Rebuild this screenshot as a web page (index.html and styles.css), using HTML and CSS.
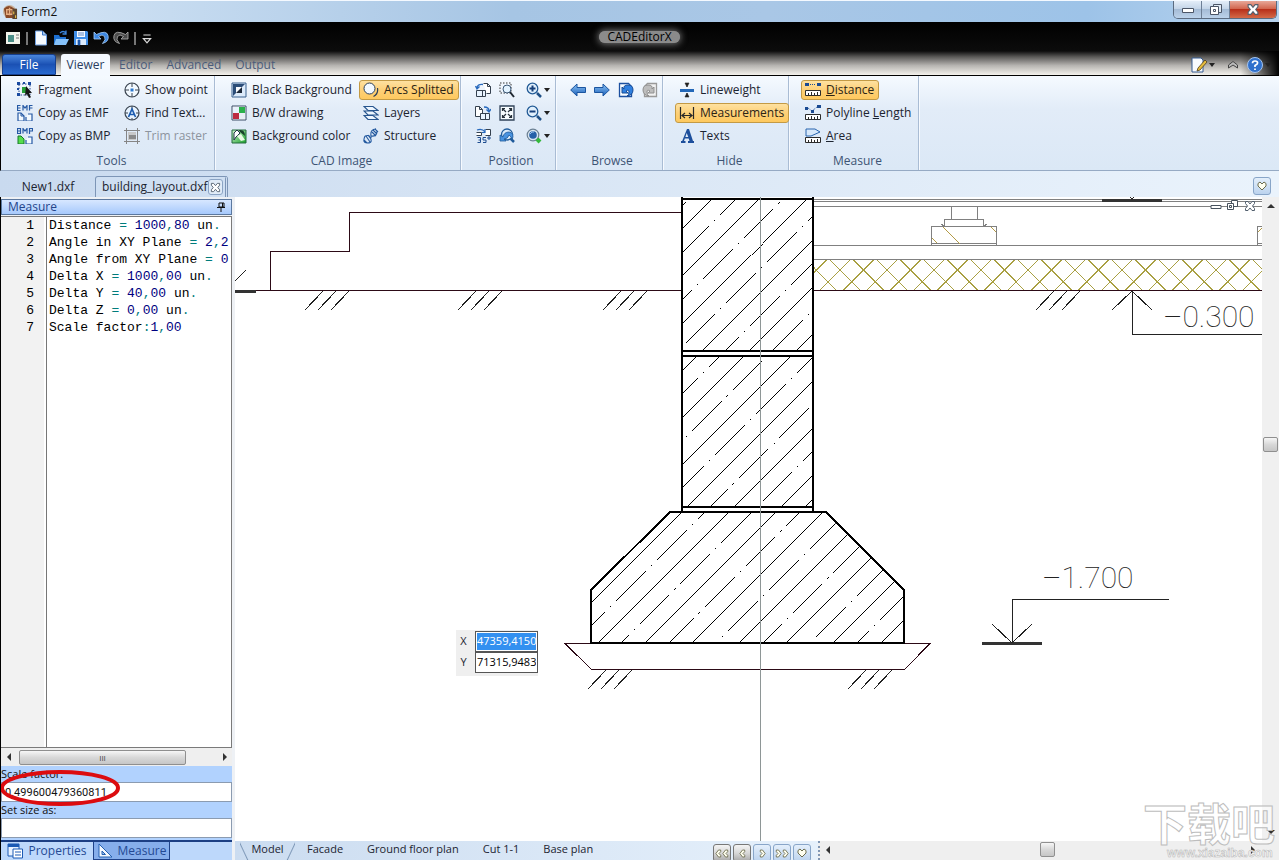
FILE: index.html
```html
<!DOCTYPE html>
<html lang="en">
<head>
<meta charset="utf-8">
<title>Form2</title>
<link rel="stylesheet" href="styles.css">
</head>
<body>
<svg class="defs" aria-hidden="true">
  <defs>
    <linearGradient id="gBlue" x1="0" y1="0" x2="0" y2="1"><stop offset="0" stop-color="#8cc4f6"/><stop offset="1" stop-color="#1c5fb8"/></linearGradient>
    <linearGradient id="gGreen" x1="0" y1="0" x2="1" y2="1"><stop offset="0" stop-color="#d4f5d0"/><stop offset="1" stop-color="#18a02a"/></linearGradient>
    <symbol id="i-app" viewBox="0 0 16 16"><circle cx="7" cy="8" r="7" fill="#c9b5a0"/><path d="M1 5q5-6 11 0v10H3z" fill="#8a4a28"/><path d="M4 6h6v5H4zM7 4v8" fill="none" stroke="#e9b184" stroke-width="1.500"/><path d="M10 5h5v11h-5z" fill="#5c4632"/><path d="M11 8h1v3h-1zM13 12h1v3h-1z" fill="#ffd24a"/></symbol>
    <symbol id="i-form" viewBox="0 0 16 16"><path d="M1 2h14v12H1z" fill="#f4f4ec"/><path d="M3 5h6v7H3z" fill="#4d8f88"/><path d="M11 5h3M11 8h3" stroke="#777"/></symbol>
    <symbol id="i-new" viewBox="0 0 16 16"><path d="M2.500 1h7l4 4v10h-11z" fill="#f6faff" stroke="#6d9ee0"/><path d="M9.500 1v4h4" fill="#a9cbf4" stroke="#3572c6"/></symbol>
    <symbol id="i-open" viewBox="0 0 16 16"><path d="M1 5h5l1 2h6v7H1z" fill="#1d6fd0"/><path d="M3 9h13l-3 6H1z" fill="#86c2fa"/><path d="M7 3q3-3 6 0M13 .5V4H9.500" fill="none" stroke="#3c86dc" stroke-width="1.300"/></symbol>
    <symbol id="i-save" viewBox="0 0 16 16"><path d="M1 1h13l1 1v13H1z" fill="#3f8ee8"/><path d="M4 1h8v6H4z" fill="#f6f9ff"/><path d="M3 9h10v6H3z" fill="#dceafc"/><path d="M5 10h2v5H5zM5 3h6M5 5h6" fill="#1c56aa" stroke="#1c56aa" stroke-width=".7"/></symbol>
    <symbol id="i-undo" viewBox="0 0 16 16"><path d="M1 2v7h7L5.500 6.500q4-3 6 0t-2 7q7-2 5.500-8T3.500 4.500z" fill="#3d87e2" stroke="#a8cffa" stroke-width=".8"/></symbol>
    <symbol id="i-redo" viewBox="0 0 16 16"><path d="M15 2v7H8l2.500-2.500q-4-3-6 0t2 7q-7-2-5.500-8T12.500 4.500z" fill="#4c4c4c" stroke="#b4b4b4" stroke-width=".8"/></symbol>
    <symbol id="i-fragment" viewBox="0 0 16 16"><path d="M2 2h11v11H2z" fill="none" stroke="#24468c" stroke-dasharray="1.500 1.500"/><path d="M0 0h3v3H0zM11 0h3v3h-3zM0 11h3v3H0zM6 0h2v2H6zM0 6h2v2H0z" fill="#1a4aa0"/><path d="M5 5h5v6H5z" fill="#27a03a"/><path d="M9 4l6 7-3 .3 2 4-2 .7-2-4-2 2z" fill="#161616"/></symbol>
    <symbol id="i-emf" viewBox="0 0 16 16"><path d="M1 8h3l3 3v5H1zM9 12v4h6V9h-4" fill="#f4faff" stroke="#2458a4" stroke-width="1.200"/><path d="M4 8v3h3" fill="none" stroke="#2458a4"/><path d="M3.500.5H.5v5h3M.5 3h3M6 5.500v-5l2 2.500 2-2.500v5M12.500 5.500v-5h3M12.500 3h3" fill="none" stroke="#2458a4" stroke-width="1.200"/></symbol>
    <symbol id="i-bmp" viewBox="0 0 16 16"><path d="M1 8h3l3 3v5H1z" fill="#55dd4c" stroke="#16782a"/><path d="M9 12v4h6V9h-4" fill="#f4faff" stroke="#2458a4" stroke-width="1.200"/><path d="M.5.500v5h3v-5zM.5 3h3M6 5.500v-5l2 2.500 2-2.500v5M12.500 6V.5h3V3h-3" fill="none" stroke="#2458a4" stroke-width="1.200"/></symbol>
    <symbol id="i-point" viewBox="0 0 16 16"><circle cx="8" cy="8" r="7" fill="#f2f9ff" stroke="#3a4450" stroke-width="1.200"/><path d="M8 1v4M8 11v4M1 8h4M11 8h4" stroke="#3a4450"/><path d="M6.500 6.500h3v3h-3z" fill="#2e7ad0"/></symbol>
    <symbol id="i-find" viewBox="0 0 16 16"><circle cx="8" cy="8" r="7" fill="#e7f3ff" stroke="#3a4450" stroke-width="1.200"/><path d="M8 1v3M1 8h3M12 8h3M8 13v2" stroke="#3a4450"/><path d="M4.500 12L8 4l3.500 8M6 9.500h4" fill="none" stroke="#1c5cb0" stroke-width="1.700"/></symbol>
    <symbol id="i-trim" viewBox="0 0 16 16"><path d="M2.500 0v16M13.500 0v16M0 2.500h16M0 13.500h16" stroke="#858585"/><path d="M4 4h8v8H4z" fill="#c8c8c8"/><path d="M5 7h7v4H5z" fill="#8a8a8a"/></symbol>
    <symbol id="i-black" viewBox="0 0 16 16"><path d="M1 1h14v14H1z" fill="#dcebfb" stroke="#38618e"/><path d="M2 2h12L2 14z" fill="#2b4d78"/><path d="M5 5h6v6H5z" fill="#f8fbff"/><path d="M11 5v6H5z" fill="#1b2737"/></symbol>
    <symbol id="i-bw" viewBox="0 0 16 16"><path d="M1 1h14v14H1z" fill="#fff" stroke="#3b4d66"/><path d="M8 2h6v6H8z" fill="#2bb04a"/><path d="M2 8h6v6H2z" fill="#bd2b3f"/><path d="M8 8h6v6H8z" fill="#e8eef4"/><path d="M2 2h6v6H2z" fill="#e8f1fb"/></symbol>
    <symbol id="i-bgcolor" viewBox="0 0 16 16"><path d="M1 2h14v13H1z" fill="url(#gGreen)" stroke="#226a3c"/><path d="M3 12V5l3-3 3 3-4 4z" fill="#fff" stroke="#23354a"/><path d="M6 8l4-2 4 6-4 1z" fill="#e9fbe4"/><path d="M8 2q6-1 6 6l-5-4z" fill="#18422a"/></symbol>
    <symbol id="i-arcs" viewBox="0 0 16 16"><circle cx="6.500" cy="6.500" r="5.500" fill="#f2f9ff" stroke="#2b3f58"/><path d="M14.500 6q1 6-4 8.500" fill="none" stroke="#2b3f58" stroke-width="1.200"/></symbol>
    <symbol id="i-layers" viewBox="0 0 16 16"><path d="M1 10.500h9l5 4H5z" fill="#edf6ff" stroke="#27558e" stroke-width="1.200"/><path d="M1 6h9l5 4H5z" fill="#edf6ff" stroke="#27558e" stroke-width="1.200"/><path d="M1 1.500h9l5 4H5z" fill="#edf6ff" stroke="#27558e" stroke-width="1.200"/></symbol>
    <symbol id="i-structure" viewBox="0 0 16 16"><path d="M2 8q6-2 6 4M2 8q-3 7 2 7t4-3M8 8q6 1 6-5M8 8q-1-7 5-7M1 12l3 3M3 8l4 6M5 7l3 4M9 4l4 4M10 2l4 4M12 1l3 3M7 9q1 1 2-1" fill="none" stroke="#23599f" stroke-width="1.100"/></symbol>
    <symbol id="i-rotl" viewBox="0 0 16 16"><path d="M8.500 1.500h4l3 3v7h-4M12.500 1.500v3h3" fill="#fff" stroke="#35414f"/><path d="M1.500 8.500h9v6h-9zM7.500 8.500v6" fill="#e9f4ff" stroke="#35414f"/><path d="M2 6q0-4 6-3.500M.5 4L2 7l2.500-2.500" fill="none" stroke="#2769bd" stroke-width="1.300"/></symbol>
    <symbol id="i-rotr" viewBox="0 0 16 16"><path d="M.5 1.500h4l3 3v7h-7zM4.500 1.500v3h3" fill="#fff" stroke="#35414f"/><path d="M5.500 8.500h9v6h-9zM10.500 8.500v6" fill="#e9f4ff" stroke="#35414f"/><path d="M9 2q5 0 5 4M11.500 4.500L14 7l2-3" fill="none" stroke="#2769bd" stroke-width="1.300"/></symbol>
    <symbol id="i-rot35" viewBox="0 0 16 16"><path d="M10.500 1.500h5v6h-5M1.500 4.500h5v3h-5" fill="#fff" stroke="#35414f"/><path d="M2 2q5-2 8 2M7 4.500h3V1" fill="none" stroke="#2769bd" stroke-width="1.200"/><path d="M2.500 9.500h3v5h-3M3.500 12h2M11 9.500H8V12h3v2.500H8M13 9h2v2h-2z" fill="none" stroke="#1e4d90"/></symbol>
    <symbol id="i-zoomwin" viewBox="0 0 16 16"><path d="M1 1h11v10H1z" fill="none" stroke="#333" stroke-dasharray="1.500 1.500"/><circle cx="8" cy="7" r="4" fill="#e3f3ff" stroke="#3c5876"/><path d="M11 10l4 5" stroke="#1e2730" stroke-width="2"/></symbol>
    <symbol id="i-fit" viewBox="0 0 16 16"><path d="M1 1h14v14H1z" fill="#f7fcff" stroke="#31435a" stroke-width="1.300"/><path d="M3.500 6V3.500H6M3.500 3.500L7 7M10 3.500h2.500V6M12.500 3.500L9 7M3.500 10v2.500H6M3.500 12.500L7 9M10 12.500h2.500V10M12.500 12.500L9 9" fill="none" stroke="#26303a" stroke-width="1.200"/></symbol>
    <symbol id="i-zoomprev" viewBox="0 0 16 16"><path d="M10 9l5 5" stroke="#205a9a" stroke-width="2.500"/><circle cx="8" cy="6.500" r="5.500" fill="#ddecfb" stroke="#235e9c" stroke-width="1.300"/><path d="M1 7v6h6L5 11q4 0 5-4 3 2 3 5 3-7-3-8-5 0-6 5z" fill="#4a93df" stroke="#205a9a" stroke-width=".8"/></symbol>
    <symbol id="i-zoomin" viewBox="0 0 16 16"><circle cx="6.500" cy="6.500" r="5.300" fill="#e1f0fd" stroke="#235b96" stroke-width="1.300"/><path d="M11 11l4 4" stroke="#1e4f86" stroke-width="2.500"/><path d="M3.500 6.500h6M6.500 3.500v6" stroke="#163f7a" stroke-width="2"/></symbol>
    <symbol id="i-zoomout" viewBox="0 0 16 16"><circle cx="6.500" cy="6.500" r="5.300" fill="#e1f0fd" stroke="#235b96" stroke-width="1.300"/><path d="M11 11l4 4" stroke="#1e4f86" stroke-width="2.500"/><path d="M3.500 6.500h6" stroke="#163f7a" stroke-width="2"/></symbol>
    <symbol id="i-zoomall" viewBox="0 0 16 16"><circle cx="7" cy="7" r="5.800" fill="#d9e6f1" stroke="#6b8093" stroke-width="1.200"/><circle cx="7" cy="7" r="3.800" fill="#2660a8"/><path d="M4 6q2-3 4-2" fill="none" stroke="#9cc4f0"/><path d="M11 11l3 3" stroke="#34b83c" stroke-width="4"/></symbol>
    <symbol id="i-back" viewBox="0 0 16 16"><path d="M7 2v3.500h8.500v5H7V14L.7 8z" fill="url(#gBlue)" stroke="#1b55a0"/></symbol>
    <symbol id="i-forward" viewBox="0 0 16 16"><path d="M9 2v3.500H.5v5H9V14l6.300-6z" fill="url(#gBlue)" stroke="#1b55a0"/></symbol>
    <symbol id="i-reload" viewBox="0 0 16 16"><path d="M1.500 1.500h9l3 3v10h-12z" fill="#f7fbff" stroke="#1c50a0" stroke-width="1.300"/><path d="M4 5v6h6L8 9q3-2 3 1t-2 4q6-1 6-6t-5-5-4 4z" fill="#2f7fdf" stroke="#174c96"/></symbol>
    <symbol id="i-reloadoff" viewBox="0 0 16 16"><path d="M14.500 14.500h-12v-10l3-3h9z" fill="#f1f1f1" stroke="#999" stroke-width="1.300"/><path d="M12 5v6H6l2-2q-3-2-3 1t2 4q-6-1-6-6t5-5 4 4z" fill="#bdbdbd" stroke="#8f8f8f"/></symbol>
    <symbol id="i-lineweight" viewBox="0 0 16 16"><path d="M1 7h14v3H1z" fill="#2368b8"/><path d="M6 1h4L8 5zM6 15h4l-2-4zM8 1v4M8 11v4" fill="#222" stroke="#222" stroke-width=".6"/></symbol>
    <symbol id="i-meas" viewBox="0 0 16 16"><path d="M1.500 2v12M14.500 2v12M3 10.500h10M6 8l-3 2.500L6 13M10 8l3 2.500L10 13" fill="none" stroke="#282828" stroke-width="1.200"/></symbol>
    <symbol id="i-texts" viewBox="0 0 16 16"><path d="M8 1h2l4 12h1v2H9v-2h1.500l-.8-2.500H5.800L5 13h1.500v2H2v-2h1.200zM7.700 5L6.400 9h2.900z" fill="#1d4f9c"/></symbol>
    <symbol id="i-dist" viewBox="0 0 16 16"><path d="M0 1h4v3H0zM12 1h4v3h-4z" fill="#1a4a92"/><path d="M5 2.500h6" stroke="#1a4a92" stroke-dasharray="1 1"/><path d="M.5 8.500h15v5H.5z" fill="#fff" stroke="#2b2b2b"/><path d="M3.500 11v2M6.500 10v3M9.500 11v2M12.500 10v3" stroke="#2b2b2b"/></symbol>
    <symbol id="i-poly" viewBox="0 0 16 16"><path d="M0 2h3v3H0zM6 5h3v3H6zM12 0h4v3h-4z" fill="#1a4a92"/><path d="M3 3l4 3 5-4" fill="none" stroke="#1a4a92" stroke-dasharray="1 1"/><path d="M.5 9.500h15v5H.5z" fill="#fff" stroke="#2b2b2b"/><path d="M3.500 12v2M6.500 11v3M9.500 12v2M12.500 11v3" stroke="#2b2b2b"/></symbol>
    <symbol id="i-area" viewBox="0 0 16 16"><path d="M1 1h9l5 3-9 4H1z" fill="#d8e9fb" stroke="#2864ae"/><path d="M.5 9.500h15v5H.5z" fill="#fff" stroke="#2b2b2b"/><path d="M3.500 12v2M6.500 11v3M9.500 12v2M12.500 11v3" stroke="#2b2b2b"/></symbol>
    <symbol id="i-edit" viewBox="0 0 16 16"><path d="M1 1h9l2 2v12H1z" fill="#f8fbff" stroke="#345a90"/><path d="M14 3l2 2-7 8-3 1 1-3z" fill="#e7bc3c" stroke="#4c3c1a" stroke-width=".8"/></symbol>
    <symbol id="i-help" viewBox="0 0 16 16"><circle cx="8" cy="8" r="7.500" fill="#2f70cc" stroke="#a5c4ee"/><path d="M5.500 6.200Q5.500 4 8 4t2.600 2Q10.600 7.200 8 8.500V10M8 11.500v1.500" fill="none" stroke="#fff" stroke-width="1.700"/></symbol>
    <symbol id="i-pin" viewBox="0 0 10 10"><path d="M3 1h5v4H3zM6.500 1v4M1 5.500h8M5 6v4" fill="none" stroke="#111"/></symbol>
    <symbol id="i-props" viewBox="0 0 16 16"><path d="M1 1h11v12H1z" fill="#eaf3ff" stroke="#1c5ab4"/><path d="M1 1h11v3H1z" fill="#1c5ab4"/><path d="M6 6h9.500v9H6z" fill="#fff" stroke="#1c5ab4"/><path d="M8 9h6M8 12h6" stroke="#1c5ab4"/></symbol>
    <symbol id="i-square" viewBox="0 0 16 16"><path d="M2 1v13h13z" fill="#f4f9ff" stroke="#2460b0"/><path d="M5 8v3.500h3.500z" fill="#9cc1ef" stroke="#2460b0"/></symbol>
    <symbol id="i-cross" viewBox="0 0 12 12"><path d="M1.500 1.500h2.500l2 2.500 2-2.500h2.500v2L8.500 6l2 2.500v2H8L6 8l-2 2.500H1.500v-2l2-2.500-2-2.500z" fill="#fff" stroke="#53606e"/></symbol>
    <symbol id="i-heart" viewBox="0 0 10 10"><path d="M1 2.500L3 1l2 2 2-2 2 1.500V5L5 9 1 5z" fill="#fffff0" stroke="#6d6d4e"/></symbol>
    <symbol id="i-chev" viewBox="0 0 8 10"><path d="M4 1h2.500v2L4.500 5l2 2v2H4L1 5z" fill="#fffff0" stroke="#6d6d4e"/></symbol>
  </defs>
</svg>

<div class="window">
  <header class="titlebar">
    <svg class="app-icon"><use href="#i-app"/></svg>
    <h1 class="form-title">Form2</h1>
    <div class="win-buttons">
      <button class="win-btn win-min" aria-label="Minimize"><svg width="14" height="12"><path d="M1.500 5.500h11v4h-11z" fill="#fff" stroke="#4b5566"/></svg></button>
      <button class="win-btn win-max" aria-label="Restore"><svg width="14" height="13"><path d="M4.500 1.500h8v8h-8z" fill="#dfe9f4" stroke="#4b5566"/><path d="M1.500 3.500h8v8h-8zM4.500 6.500h2v2h-2z" fill="#fff" stroke="#4b5566"/></svg></button>
      <button class="win-btn win-close" aria-label="Close"><svg width="14" height="12"><use href="#i-cross"/></svg></button>
    </div>
  </header>

  <div class="caption">
    <div class="qat">
      <button class="tool" aria-label="Form"><svg><use href="#i-form"/></svg></button>
      <span class="bar"></span>
      <button class="tool" aria-label="New"><svg><use href="#i-new"/></svg></button>
      <button class="tool" aria-label="Open"><svg><use href="#i-open"/></svg></button>
      <button class="tool" aria-label="Save"><svg><use href="#i-save"/></svg></button>
      <button class="tool" aria-label="Undo"><svg><use href="#i-undo"/></svg></button>
      <button class="tool" aria-label="Redo"><svg><use href="#i-redo"/></svg></button>
      <span class="bar"></span>
      <button class="more" aria-label="Customize"><svg viewBox="0 0 10 10"><path d="M2 2.500h6M2 5.500h6L5 9z" fill="none" stroke="#ddd"/></svg></button>
    </div>
    <div class="caption-title">CADEditorX</div>
  </div>

  <nav class="tabs">
    <button class="tab file">File</button>
    <button class="tab active">Viewer</button>
    <button class="tab">Editor</button>
    <button class="tab">Advanced</button>
    <button class="tab">Output</button>
    <div class="tabs-right">
      <button class="tool" aria-label="Style"><svg><use href="#i-edit"/></svg></button><i class="caret"></i>
      <button class="tool collapse" aria-label="Collapse ribbon"><svg viewBox="0 0 16 16"><path d="M3.500 11V8L8 4.500 12.500 8v3L8 8z" fill="#bbb" stroke="#444"/></svg></button>
      <button class="tool" aria-label="Help"><svg><use href="#i-help"/></svg></button><i class="caret"></i>
    </div>
  </nav>

  <section class="ribbon">
    <div class="group g-tools">
      <div class="cmds">
        <button class="cmd"><svg><use href="#i-fragment"/></svg>Fragment</button>
        <button class="cmd"><svg><use href="#i-point"/></svg>Show point</button>
        <button class="cmd"><svg><use href="#i-emf"/></svg>Copy as EMF</button>
        <button class="cmd"><svg><use href="#i-find"/></svg>Find Text...</button>
        <button class="cmd"><svg><use href="#i-bmp"/></svg>Copy as BMP</button>
        <button class="cmd" disabled><svg><use href="#i-trim"/></svg>Trim raster</button>
      </div>
      <h2>Tools</h2>
    </div>
    <div class="group g-image">
      <div class="cmds">
        <button class="cmd"><svg><use href="#i-black"/></svg>Black Background</button>
        <button class="cmd on"><svg><use href="#i-arcs"/></svg>Arcs Splitted</button>
        <button class="cmd"><svg><use href="#i-bw"/></svg>B/W drawing</button>
        <button class="cmd"><svg><use href="#i-layers"/></svg>Layers</button>
        <button class="cmd"><svg><use href="#i-bgcolor"/></svg>Background color</button>
        <button class="cmd"><svg><use href="#i-structure"/></svg>Structure</button>
      </div>
      <h2>CAD Image</h2>
    </div>
    <div class="group g-pos">
      <div class="cmds">
        <button class="cmd" aria-label="Rotate left"><svg><use href="#i-rotl"/></svg></button>
        <button class="cmd" aria-label="Zoom window"><svg><use href="#i-zoomwin"/></svg></button>
        <button class="cmd drop" aria-label="Zoom in"><svg><use href="#i-zoomin"/></svg><i class="caret"></i></button>
        <button class="cmd" aria-label="Rotate right"><svg><use href="#i-rotr"/></svg></button>
        <button class="cmd" aria-label="Fit"><svg><use href="#i-fit"/></svg></button>
        <button class="cmd drop" aria-label="Zoom out"><svg><use href="#i-zoomout"/></svg><i class="caret"></i></button>
        <button class="cmd" aria-label="Rotate by angle"><svg><use href="#i-rot35"/></svg></button>
        <button class="cmd" aria-label="Previous zoom"><svg><use href="#i-zoomprev"/></svg></button>
        <button class="cmd drop" aria-label="Zoom all"><svg><use href="#i-zoomall"/></svg><i class="caret"></i></button>
      </div>
      <h2>Position</h2>
    </div>
    <div class="group g-browse">
      <div class="cmds">
        <button class="cmd" aria-label="Back"><svg><use href="#i-back"/></svg></button>
        <button class="cmd" aria-label="Forward"><svg><use href="#i-forward"/></svg></button>
        <button class="cmd" aria-label="Reload"><svg><use href="#i-reload"/></svg></button>
        <button class="cmd" aria-label="Repeat"><svg><use href="#i-reloadoff"/></svg></button>
      </div>
      <h2>Browse</h2>
    </div>
    <div class="group g-hide">
      <div class="cmds">
        <button class="cmd"><svg><use href="#i-lineweight"/></svg>Lineweight</button>
        <button class="cmd on"><svg><use href="#i-meas"/></svg>Measurements</button>
        <button class="cmd"><svg><use href="#i-texts"/></svg>Texts</button>
      </div>
      <h2>Hide</h2>
    </div>
    <div class="group g-measure">
      <div class="cmds">
        <button class="cmd on"><svg><use href="#i-dist"/></svg><span><u>D</u>istance</span></button>
        <button class="cmd"><svg><use href="#i-poly"/></svg><span>Polyline <u>L</u>ength</span></button>
        <button class="cmd"><svg><use href="#i-area"/></svg><span><u>A</u>rea</span></button>
      </div>
      <h2>Measure</h2>
    </div>
  </section>

  <nav class="docs">
    <button class="doc">New1.dxf</button>
    <div class="doc current"><button class="doc-name">building_layout.dxf</button><button class="doc-close" aria-label="Close document"><svg><use href="#i-cross"/></svg></button></div>
    <button class="nav-btn docs-menu" aria-label="Documents"><svg class="heart"><use href="#i-heart"/></svg></button>
  </nav>

  <div class="work">
    <aside class="side">
      <div class="side-head"><h2>Measure</h2><button class="pin" aria-label="Pin"><svg><use href="#i-pin"/></svg></button></div>
      <ol class="code">
        <li><b>1</b><code>Distance <s>=</s> <em>1000</em><s>,</s><em>80</em> un<s>.</s></code></li>
        <li><b>2</b><code>Angle in XY Plane <s>=</s> <em>2</em><s>,</s><em>2</em></code></li>
        <li><b>3</b><code>Angle from XY Plane <s>=</s> <em>0</em></code></li>
        <li><b>4</b><code>Delta X <s>=</s> <em>1000</em><s>,</s><em>00</em> un<s>.</s></code></li>
        <li><b>5</b><code>Delta Y <s>=</s> <em>40</em><s>,</s><em>00</em> un<s>.</s></code></li>
        <li><b>6</b><code>Delta Z <s>=</s> <em>0</em><s>,</s><em>00</em> un<s>.</s></code></li>
        <li><b>7</b><code>Scale factor<s>:</s><em>1</em><s>,</s><em>00</em></code></li>
      </ol>
      <div class="hscroll side-scroll"><i class="arrow left"></i><span class="thumb">III</span><span class="track"></span><i class="arrow right"></i></div>
      <form class="fields">
        <label for="scale">Scale factor:</label>
        <input id="scale" value="0.499600479360811">
        <label for="size">Set size as:</label>
        <input id="size">
        <svg class="ring" width="120" height="38" aria-hidden="true"><ellipse cx="59" cy="19" rx="58" ry="16" fill="none" stroke="#dc0c10" stroke-width="4"/></svg>
      </form>
      <nav class="side-tabs">
        <button><svg><use href="#i-props"/></svg>Properties</button>
        <button class="current"><svg><use href="#i-square"/></svg>Measure</button>
      </nav>
    </aside>

    <main class="main">
      <div class="stage">
        <div class="canvas">
          <svg class="drawing" role="img" aria-label="Foundation section">
            <defs>
              <clipPath id="concrete"><path d="M683 200H812V350H683zM683 357H812V506H683zM671 513H825L903 590V642H592V590z"/></clipPath>
              <clipPath id="slab"><path d="M814 260H1262V290H814z"/></clipPath>
            </defs>
            <g transform="translate(-235 -197)" fill="none" shape-rendering="crispEdges">
              <g clip-path="url(#concrete)" stroke="#000">
                <g transform="rotate(-45)">
                  <path d="M-60 644.400H450M-60 677.700H450M-60 711H450M-60 744.300H450M-60 777.600H450M-60 810.900H450M-60 844.200H450M-60 877.500H450M-60 910.800H450M-60 944.100H450M-60 977.400H450M-60 1010.700H450M-60 1044H450M-60 1077.300H450"/>
                  <path stroke-dasharray="42 7 1.700 7" d="M-46.500 627.700H450M-46.500 661H450M-46.500 694.300H450M-46.500 727.600H450M-46.500 760.900H450M-46.500 794.200H450M-46.500 827.500H450M-46.500 860.800H450M-46.500 894.100H450M-46.500 927.400H450M-46.500 960.700H450M-46.500 994H450M-46.500 1027.300H450M-46.500 1060.600H450"/>
                </g>
              </g>
              <g clip-path="url(#slab)" stroke="#a9a042">
                <path d="M805.800 259.500l31 31m-7.500-31l31 31m-7.500-31l31 31m-7.500-31l31 31m-7.500-31l31 31m-7.500-31l31 31m-7.500-31l31 31m-7.500-31l31 31m-7.500-31l31 31m-7.500-31l31 31m-7.500-31l31 31m-7.500-31l31 31m-7.500-31l31 31m-7.500-31l31 31m-7.500-31l31 31m-7.500-31l31 31m-7.500-31l31 31m-7.500-31l31 31m-7.500-31l31 31m-7.500-31l31 31"/>
                <path d="M827.200 259.500l-31 31m54.500-31l-31 31m54.500-31l-31 31m54.500-31l-31 31m54.500-31l-31 31m54.500-31l-31 31m54.500-31l-31 31m54.500-31l-31 31m54.500-31l-31 31m54.500-31l-31 31m54.500-31l-31 31m54.500-31l-31 31m54.500-31l-31 31m54.500-31l-31 31m54.500-31l-31 31m54.500-31l-31 31m54.500-31l-31 31m54.500-31l-31 31m54.500-31l-31 31m54.500-31l-31 31"/>
              </g>
              <path stroke="#808080" d="M814 199.500H1262M814 201.500H1262M814 206.500H1262M814 245.500H1262M814 259.500H1262M951.500 206V219M977.500 206V219M944.500 226V219.500H983.500V226M931.500 245V226.500H996.500V245M931 243.500H997M941 224l3 2M987 224l-3 2M1262 226.500H1257.500V245M1257 243.500H1262"/>
              <path stroke="#b39a45" d="M943 227l17 17M932 238l5 5M991 227l5 5M1258 232l4-4"/>
              <path stroke="#2c0a16" d="M682 212.500H349.500V251.500H270.500V290.500M256 290.500H682M814 290.500H1262M565 643.500H930L904.500 669.500H591.500z"/>
              <path stroke="#222" d="M305 310l18-19M318 310l18-19M331 310l18-19M458 310l18-19M471 310l18-19M484 310l18-19M603 310l18-19M616 310l18-19M629 310l18-19M1036 310l18-19M1049 310l18-19M1062 310l18-19M588 689l18-19M601 689l18-19M614 689l18-19M848 689l18-19M861 689l18-19M874 689l18-19M235 281l11-11"/>
              <path stroke="#000" stroke-width="2" d="M682 197V512M813 197V512M681 199H814M682 351H813M682 356H813M682 507H813M670 512H826L904 590V643H591V590z"/>
              <path stroke="#333" stroke-width="3" d="M235 291.500H256M1102 200.500H1162M982 643.500H1042"/>
              <path stroke="#222" d="M1130 197l2 2 2-2M1112 310l20-19 20 19M1132.500 291V334.500H1262M992 624l20 19 20-19M1012.500 643V599.500H1169"/>
              <path stroke="#8e9696" d="M760.500 197V900"/>
              <g class="dims"><text x="1163" y="327">–0.300</text><text x="1042" y="588">–1.700</text></g>
            </g>
          </svg>
          <div class="mdi">
            <button aria-label="Minimize document"><svg width="12" height="12"><path d="M1 5.500h10v3H1z" fill="#fff" stroke="#47525e"/></svg></button>
            <button aria-label="Restore document"><svg width="14" height="12"><path d="M5.500 1.500h6v6h-6z" fill="#fff" stroke="#47525e"/><path d="M1.500 4.500h6v6h-6zM3.500 6.500h2v2h-2z" fill="#fff" stroke="#47525e"/></svg></button>
            <button aria-label="Close document view"><svg width="12" height="12"><use href="#i-cross"/></svg></button>
          </div>
          <div class="coords">
            <label for="cx">X</label><input id="cx" class="sel" value="47359,4150">
            <label for="cy">Y</label><input id="cy" value="71315,9483">
          </div>
        </div>
        <div class="vscroll"><i class="arrow up"></i><span class="thumb"></span><i class="arrow down"></i></div>
      </div>
      <div class="foot">
        <nav class="layouts">
          <button class="model">Model</button>
          <button>Facade</button>
          <button>Ground floor plan</button>
          <button>Cut 1-1</button>
          <button>Base plan</button>
        </nav>
        <div class="layout-nav">
          <button class="nav-btn off" aria-label="First"><svg class="chev"><use href="#i-chev"/></svg><svg class="chev"><use href="#i-chev"/></svg></button>
          <button class="nav-btn off" aria-label="Previous"><svg class="chev"><use href="#i-chev"/></svg></button>
          <button class="nav-btn" aria-label="Next"><svg class="chev flip"><use href="#i-chev"/></svg></button>
          <button class="nav-btn" aria-label="Last"><svg class="chev flip"><use href="#i-chev"/></svg><svg class="chev flip"><use href="#i-chev"/></svg></button>
          <button class="nav-btn" aria-label="List"><svg class="heart"><use href="#i-heart"/></svg></button>
        </div>
        <div class="hscroll foot-scroll"><i class="arrow left"></i><span class="track"></span><span class="thumb"></span><span class="track"></span><i class="arrow right"></i></div>
      </div>
      <svg class="mark" width="136" height="60"><text class="mark-cn" x="0" y="41">下载吧</text><text class="mark-url" x="24" y="57">www.xiazaiba.com</text></svg>
    </main>
  </div>
</div>
</body>
</html>
```
FILE: styles.css
```css
*, *::after { box-sizing: border-box; }
body { margin: 0; font: 12px/16px "Open Sans", "Noto Sans", sans-serif; color: #1c2430; background: #fff; }
button, input { font: inherit; color: inherit; margin: 0; padding: 0; border: 0; background: none; border-radius: 0; }
button { display: flex; align-items: center; justify-content: center; white-space: nowrap; }
h1, h2 { margin: 0; font: inherit; }
svg { flex: none; width: 16px; height: 16px; display: block; }
svg[width="12"] { width: 12px; height: 12px; }
svg[width="14"] { width: 14px; height: 13px; }
.defs { position: absolute; width: 0; height: 0; }
.window { height: 100vh; display: flex; flex-direction: column; overflow: hidden; }

.titlebar { flex: none; height: 22px; display: flex; align-items: center; padding: 0 2px 0 3px; gap: 3px; background: linear-gradient(90deg, #d6e6f6, #a6c5e4 40%, #a9c7e6 60%, #9dc3e8 85%, #b7d3ee); border-top: 1px solid #f4f9ff; }
.form-title { color: #111; }
.app-icon { width: 15px; height: 15px; }
.win-buttons { margin-left: auto; align-self: flex-start; display: flex; height: 18px; border: 1px solid #5b6b80; border-top: 0; border-radius: 0 0 5px 5px; overflow: hidden; }
.win-btn { width: 28px; background: linear-gradient(#e3edf8, #c4d5e8 45%, #a5bcd6 50%, #bcd2ea); border-right: 1px solid #6d7f96; }
.win-close { width: 46px; border: 0; background: linear-gradient(#e8a798, #d2664f 45%, #b8301a 50%, #d46a48); }

.caption { flex: none; height: 29px; display: grid; grid-template-columns: 1fr auto 1fr; align-items: center; background: linear-gradient(#000, #0c0c0c); }
.qat { display: flex; align-items: center; gap: 4px; padding: 3px 0 0 5px; }
.qat .bar { width: 2px; height: 13px; margin: 0 1px; background: #777; }
.more svg { width: 12px; height: 12px; }
.caption-title { padding: 0 8px; color: #000; border-radius: 8px; background: #8b8b8b; box-shadow: 0 0 6px 1px #8b8b8b inset, 0 0 7px 1px #777; margin: 0 4px; height: 12px; line-height: 12px; }

.tabs { flex: none; height: 25px; display: flex; align-items: stretch; padding: 3px 8px 0 2px; background: linear-gradient(90deg, transparent 97%, #000), linear-gradient(#0c0c0c, #5c5b59 25%, #b5b3b0 60%, #f4f2ec); border-bottom: 1px solid #000; }
.tab { padding: 0 7px; color: #4b5c7a; }
.tab.file { width: 54px; margin-right: 5px; color: #fff; background: linear-gradient(#4a86dc, #1b51b4 50%, #2a6bd0); border: 1px solid #163f8e; border-radius: 3px 3px 0 0; }
.tab.active { width: 49px; padding: 0; margin: 0 2px -1px 0; color: #2a3c60; background: #f4f9ff; border-radius: 3px 3px 0 0; }
.tabs-right { margin-left: auto; display: flex; align-items: center; gap: 2px; }
.collapse { margin: 0 4px 0 8px; }
.caret { width: 0; height: 0; border: 3px solid transparent; border-top: 4px solid #222; border-bottom: 0; }

.ribbon { flex: none; height: 95px; display: flex; border-left: 1px solid #000; border-bottom: 1px solid #96aac4; background: linear-gradient(#f5faff, #e2ecf8 35%, #dbe8f6); }
.group { display: flex; flex-direction: column; justify-content: space-between; padding: 4px 0 1px 12px; border-right: 1px solid #a9bcd4; box-shadow: 1px 0 #f6faff; }
.group h2 { margin-left: -4px; text-align: center; color: #3d5474; }
.cmds { display: grid; grid-auto-rows: 20px; row-gap: 3px; justify-items: start; }
.cmd { gap: 5px; height: 20px; border: 1px solid transparent; border-radius: 3px; padding: 0 4px 0 3px; }
.cmd:disabled { color: #8d949e; }
.cmd.on { color: #2c2415; border-color: #c39a45; background: linear-gradient(#fee1a0, #fdd078 50%, #fec95f); }
.g-tools { width: 214px; }
.g-tools .cmds { grid-template-columns: 107px 1fr; }
.g-image { width: 246px; }
.g-image .cmds { grid-template-columns: 132px 1fr; }
.g-pos { width: 95px; padding-left: 10px; }
.g-pos .cmds { grid-template-columns: 24px 27px 1fr; }
.g-pos .drop { gap: 2px; padding-right: 0; }
.g-browse { width: 107px; padding-left: 10px; }
.g-browse .cmds { grid-template-columns: repeat(4, 24px); }
.g-hide { width: 126px; }
.g-measure { width: 130px; }

.docs { flex: none; height: 26px; display: flex; align-items: flex-end; padding: 0 8px 0 1px; background: linear-gradient(90deg, #c9daef, #d9e6f5 45%, #eaf3fc); }
.doc { width: 94px; height: 21px; }
.doc.current { width: 133px; display: flex; align-items: center; justify-content: space-between; padding: 0 2px 0 6px; border: 1px solid #7d95b6; border-right: 3px double #7d95b6; border-bottom: 0; border-radius: 3px 3px 0 0; background: #cfdff2; }
.doc-close { width: 15px; height: 16px; border: 1px solid #8ba4c4; border-radius: 3px; background: #e1ecf8; }
.doc-close svg { width: 11px; height: 11px; }
.nav-btn { width: 18px; height: 18px; border: 1px solid #88a5c8; border-radius: 3px; background: linear-gradient(#e4effb, #bcd3ee); }
.nav-btn.off { border-color: #777; background: linear-gradient(#f4f4f4, #d8d8d8 50%, #a9a9a9); }
.docs-menu { margin: 0 0 2px auto; }
.heart { width: 10px; height: 10px; }
.chev { width: 7px; height: 9px; }
.flip { transform: scaleX(-1); }

.work { flex: 1; min-height: 0; display: flex; border-left: 1px solid #000; }
.side { width: 234px; flex: none; display: flex; flex-direction: column; background: #eef1f5; padding: 2px 3px 0 0; }
.side-head { height: 16px; display: flex; align-items: center; justify-content: space-between; padding: 0 5px 0 6px; color: #24458a; border: 1px solid #5b789f; background: linear-gradient(#d7e7ff, #a6c9fc); }
.pin svg { width: 10px; height: 10px; }
.code { flex: 1; min-height: 0; margin: 1px 0 0; padding: 0; list-style: none; overflow: hidden; font: 13px/17px "Liberation Mono", monospace; color: #000; border: 1px solid #7a7a7a; border-left: 0; background: linear-gradient(90deg, #f2f2f2 43px, #fff 43px); display: flex; flex-direction: column; }
.code li { flex: none; display: flex; }
.code::after { content: ""; flex: 1; width: 46px; border-right: 1px solid #777; }
.code b { width: 46px; flex: none; padding-right: 12px; text-align: right; font-weight: 400; border-right: 1px solid #777; }
.code code { font: inherit; padding-left: 2px; white-space: pre; }
.code em { font-style: normal; color: #000080; }
.code s { text-decoration: none; color: #007c7c; }
.hscroll { display: flex; align-items: center; height: 17px; background: #efefef; }
.thumb { border: 1px solid #8f8f8f; border-radius: 2px; background: linear-gradient(#f6f6f6, #d8d8d8 50%, #c6c6c6); }
.arrow { width: 0; height: 0; border: 4px solid transparent; }
.arrow.left { border-right-color: #333; border-left: 0; }
.arrow.right { border-left-color: #333; border-right: 0; }
.arrow.up { border-bottom-color: #333; border-top: 0; }
.arrow.down { border-top-color: #333; border-bottom: 0; }
.track { flex: 1; }
.side-scroll { flex: none; padding: 0 5px 0 6px; height: 18px; }
.side-scroll .thumb { width: 167px; height: 15px; margin-left: 8px; text-align: center; font-size: 8px; line-height: 13px; color: #444; }
.fields { flex: none; position: relative; display: flex; flex-direction: column; padding-bottom: 2px; background: #b1d2fe; font-size: 11px; color: #111; }
.fields label { height: 16px; line-height: 16px; }
.fields input { height: 20px; padding: 0 3px; background: #fff; border: 1px solid #8b9bb0; font-family: "Roboto", sans-serif; }
.ring { position: absolute; left: 0; top: 3px; width: 120px; height: 38px; }
.side-tabs { flex: none; height: 20px; display: flex; border-top: 2px solid #1c3f84; background: #bdd8fb; color: #244a94; }
.side-tabs button { gap: 5px; padding: 0 8px; width: 92px; }
.side-tabs .current { width: 77px; padding: 0; border: 1px solid #1f438a; border-top: 0; background: #86aeeb; }

.main { flex: 1; min-width: 0; position: relative; display: flex; flex-direction: column; }
.stage { flex: 1; min-height: 0; display: flex; }
.canvas { flex: 1; min-width: 0; position: relative; overflow: hidden; background: #fff; }
.drawing { width: 100%; height: 100%; }
.dims { font: 100 30px "Roboto", sans-serif; fill: #222; }
.mdi { position: absolute; right: 6px; top: 2px; display: flex; gap: 4px; }
.coords { position: absolute; left: 221px; top: 433px; width: 82px; height: 46px; padding: 1px 0 3px; display: grid; grid-template: 21px 21px / 19px 63px; background: #efefef; font-size: 11px; }
.coords label { text-align: center; line-height: 20px; padding-right: 4px; }
.coords input { width: 63px; border: 1px solid #555; padding: 0 1px 1px; background: #fff; color: #000; }
.coords .sel { color: #fff; background: #3390f0; box-shadow: inset 0 0 0 1px #fff; }
.vscroll { width: 17px; flex: none; display: flex; flex-direction: column; align-items: center; justify-content: space-between; padding: 7px 0; background: #f0f0f0; }
.vscroll .thumb { width: 15px; height: 15px; margin-bottom: 150px; }
.foot { flex: none; height: 19px; display: flex; background: linear-gradient(90deg, #cbdcf0, #e8f2fc 60%); }
.layouts { display: flex; padding-left: 5px; align-items: flex-start; font-size: 11px; flex: 1; min-width: 0; }
.layouts button { padding: 0 12px; height: 16px; }
.layouts .model { height: 19px; padding: 0 0 3px; width: 55px; background: linear-gradient(65deg, transparent 6px, #7f99b8 7px, transparent 8px), linear-gradient(-65deg, transparent 6px, #7f99b8 7px, transparent 8px); }
.layout-nav { display: flex; gap: 2px; padding: 3px 7px 0 0; }
.foot-scroll { flex: 0 1 461px; min-width: 0; height: 19px; padding: 0 24px 2px 6px; border-left: 2px dotted #8096b4; }
.foot-scroll .thumb { width: 15px; height: 15px; margin-left: 14px; }
.mark { position: absolute; right: 0; bottom: 0; width: 136px; height: 60px; overflow: visible; }
.mark-cn { font: 700 44px "Noto Sans CJK SC", sans-serif; fill: #ffffff99; stroke: #bdbdbd; }
.mark-url { font: 700 12px "Liberation Sans", sans-serif; fill: #f7f7f7; stroke: #b4b4b4; stroke-width: .5; }
```
